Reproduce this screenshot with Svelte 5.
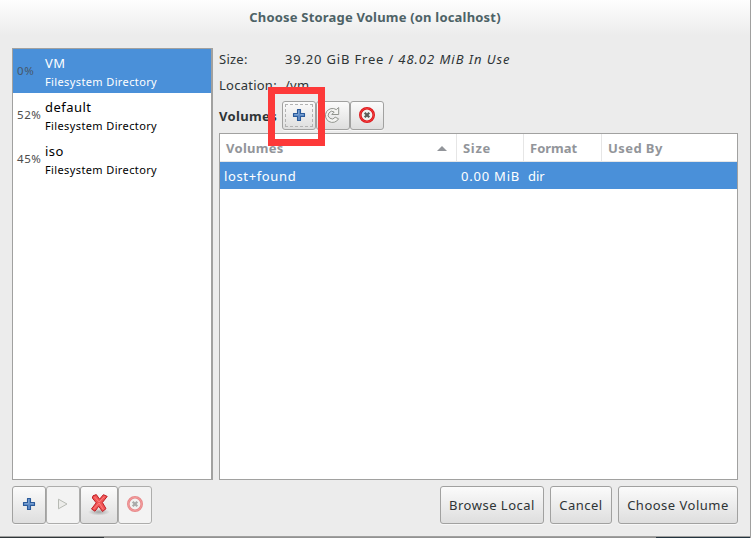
<script>
  const pools = [
    { usage: '0%', name: 'VM', selected: true },
    { usage: '52%', name: 'default' },
    { usage: '45%', name: 'iso' }
  ];
</script>

{#snippet plus()}
  <svg width="14" height="14" viewBox="0 0 14 14">
    <path d="M5.5 1.5h3v4h4v3h-4v4h-3v-4h-4v-3h4z" fill="#5f8cc6" stroke="#2a5a9a" stroke-width="1.1" stroke-linejoin="round" />
    <path d="M6.5 2.5v4h-4M8.5 6.5h3" fill="none" stroke="#86aad6" stroke-width=".7" />
  </svg>
{/snippet}

{#snippet stop()}
  <svg width="18" height="18" viewBox="0 0 18 18">
    <circle cx="9" cy="9" r="6.7" fill="#f1f1ef" stroke="#dc191d" stroke-width="2.6" />
    <circle cx="9" cy="9" r="6.7" fill="none" stroke="#f33a3a" stroke-width="1" />
    <path d="M6.7 6.7l4.6 4.6M11.3 6.7l-4.6 4.6" stroke="#5a5d59" stroke-width="2.2" />
  </svg>
{/snippet}

<main>
  <header><span class="title">Choose Storage Volume (on localhost)</span></header>
  <div class="body">
    <div class="pools">
      {#each pools as pool}
        <div class="pool" class:selected={pool.selected}>
          <span class="usage">{pool.usage}</span>
          <div class="info"><div class="name">{pool.name}</div><div class="kind">Filesystem Directory</div></div>
        </div>
      {/each}
    </div>
    <section>
      <div class="detail"><span class="label">Size:</span><span class="free">39.20 GiB Free / <i>48.02 MiB In Use</i></span></div>
      <div class="detail"><span class="label">Location:</span><span>/vm</span></div>
      <div class="toolbar">
        <b>Volumes</b>
        <div class="group">
          <button class="add" aria-label="New volume">{@render plus()}<span class="highlight"></span></button>
          <button class="refresh" aria-label="Refresh">
            <svg width="18" height="18" viewBox="0 0 18 18"><path d="M15.6 12.8A7 7 0 1 1 13.3 3.6L15.7 1.5V8.5H8.8L11.2 6A3.8 3.8 0 1 0 12.2 11.2Z" fill="#f4f4f2" stroke="#92958f" stroke-linejoin="round" /></svg>
          </button>
          <button aria-label="Delete volume">{@render stop()}</button>
        </div>
      </div>
      <div class="table">
        <div class="row head">
          <span class="volumes">Volumes<svg width="10" height="5" viewBox="0 0 10 5"><path d="M0 5L5 0L10 5Z" fill="#92959a" /></svg></span>
          <span class="size">Size</span><span class="format">Format</span><span class="used">Used By</span>
        </div>
        <div class="row item"><span class="file">lost+found</span><span class="bytes">0.00 MiB</span><span>dir</span><span></span></div>
      </div>
    </section>
  </div>
  <footer>
    <div class="group">
      <button aria-label="Add pool">{@render plus()}</button>
      <button class="disabled" aria-label="Start pool"><svg width="12" height="12" viewBox="0 0 12 12"><path d="M1.5 1.2L10 6L1.5 10.8Z" fill="#ececea" stroke="#b7bab4" /></svg></button>
      <button class="remove" aria-label="Delete pool">
        <svg width="24" height="24" viewBox="0 0 24 24">
          <defs><radialGradient id="shadow"><stop stop-color="#777" stop-opacity=".6" /><stop offset="1" stop-color="#777" stop-opacity="0" /></radialGradient></defs>
          <ellipse cx="12" cy="20" rx="11" ry="3.5" fill="url(#shadow)" />
          <path d="M6 3.8L9.3 2.6L12.6 7.2L16.4 2.7L20.2 4.4L15.4 10.5L19 16.7L15.5 19.5L11.7 14.3L8 19.2L4.5 17L9.2 10.8L5.4 6Z" fill="#f15555" stroke="#bd1b22" stroke-linejoin="round" />
          <path d="M7.5 5L12.2 10L17.5 4.6M6.5 17L12.2 11L16.3 17.5" fill="none" stroke="#ff8d8d" stroke-width=".8" />
        </svg>
      </button>
      <button class="disabled stop-pool" aria-label="Stop pool">{@render stop()}</button>
    </div>
    <div class="actions">
      <button class="browse">Browse Local</button><button class="cancel">Cancel</button><button class="choose">Choose Volume</button>
    </div>
  </footer>
  <div class="edge"></div>
</main>

<style>
  :global(body) { margin: 0; }
  main { box-sizing: border-box; width: 751px; height: 538px; display: flex; flex-direction: column; overflow: hidden; border-right: 1px solid #a0a09f; background: linear-gradient(#fefefe 0, #ececec 36px); font: 13px/20px "Noto Sans", sans-serif; color: #2e3436; white-space: nowrap; }
  header { height: 48px; box-sizing: border-box; padding-top: 7px; text-align: center; font-weight: bold; color: #4d6266; }
  .title { letter-spacing: .19px; }
  .body { display: flex; height: 432px; gap: 6px; padding-left: 12px; }
  .pools { box-sizing: border-box; width: 201px; border: 1px solid #a1a1a0; border-right-width: 2px; background: #fff; }
  .pool { height: 44px; display: flex; color: #000; }
  .usage { width: 32px; box-sizing: border-box; padding: 12px 0 0 4px; font-size: 11.5px; line-height: 20px; letter-spacing: .6px; color: #4b4b4b; }
  .name { height: 23px; box-sizing: border-box; padding-top: 4px; letter-spacing: .45px; }
  .kind { font-size: 11px; line-height: 20px; letter-spacing: .38px; }
  .selected { background: #4a90d9; color: #fff; }
  .selected .usage { color: #46586b; }
  section { width: 519px; }
  .detail { height: 26px; display: flex; line-height: 22px; letter-spacing: .25px; }
  .label { width: 66px; }
  .free { letter-spacing: .82px; }
  .free i { letter-spacing: .96px; }
  .toolbar { height: 33px; display: flex; }
  .toolbar b { width: 63px; padding-top: 6px; letter-spacing: .35px; }
  .group { display: flex; }
  button { box-sizing: border-box; position: relative; display: flex; align-items: center; justify-content: center; width: 34px; height: 38px; padding: 0; border: 1px solid #a1a1a0; border-radius: 3px; background: linear-gradient(#fbfbfb, #dedede); box-shadow: 0 1px #f7f7f7; color: #2e3436; font: inherit; letter-spacing: .5px; }
  .group svg { margin-bottom: 2px; }
  .toolbar button { height: 29px; margin-top: 1px; }
  .toolbar .add::after { content: ""; position: absolute; inset: 2px; border: 1px dashed #b2b2b2; }
  .refresh svg { margin-left: -2px; }
  .highlight { position: absolute; z-index: 2; box-sizing: border-box; width: 57px; height: 59px; left: -15px; top: -15px; border: 7px solid #fd3939; }
  .table { box-sizing: border-box; height: 347px; border: 1px solid #a1a1a0; background: #fff; }
  .row { display: grid; grid-template-columns: 237px 67px 78px 1fr; }
  .head { height: 28px; color: #92959a; font-weight: bold; line-height: 26px; }
  .head span { box-sizing: border-box; padding-left: 6px; padding-top: 1px; border-right: 1px solid #e6e6e6; border-bottom: 1px solid #e6e6e6; }
  .head .used { border-right: 0; letter-spacing: .42px; }
  .head .size { letter-spacing: .7px; }
  .head .volumes { display: flex; align-items: center; justify-content: space-between; padding-right: 9px; letter-spacing: .28px; }
  .item { height: 27px; line-height: 28px; background: #4a90d9; color: #fff; }
  .item span { padding-left: 4px; }
  .file { letter-spacing: .63px; }
  .bytes { letter-spacing: .78px; }
  footer { display: flex; justify-content: space-between; height: 56px; box-sizing: border-box; padding: 6px 12px 0; }
  .remove { width: 38px; }
  .disabled { background: #f3f3f3; border-color: #adadac; }
  .stop-pool svg { opacity: .48; }
  .actions { display: flex; gap: 6px; }
  .browse { width: 104px; } .cancel { width: 62px; } .choose { width: 120px; }
  .edge { height: 1px; border-top: 1px solid #a0a09f; background: linear-gradient(90deg, #30363a 0 104px, #929292 104px 656px, #24343f 656px); }
</style>
